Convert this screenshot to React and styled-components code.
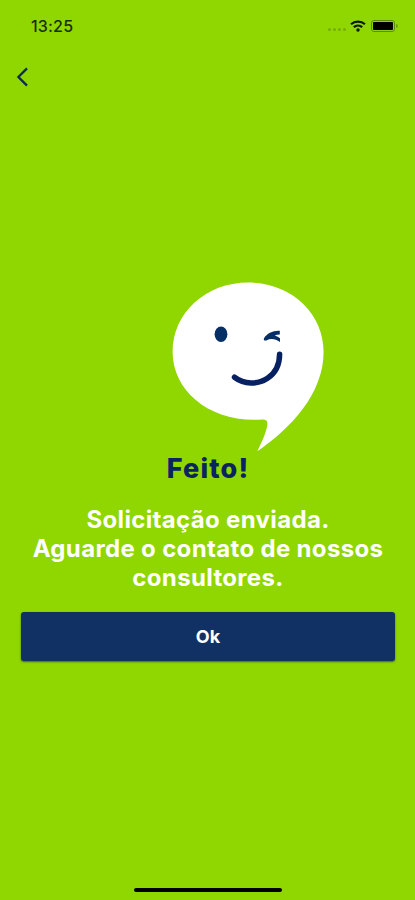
import React from 'react'
import styled, { createGlobalStyle } from 'styled-components'

const App = () => {
  return (
    <>
      <GlobalStyle />
      <Screen>
        <StatusBar>
          <Time>13:25</Time>
          <StatusIcons>
            <Dots>
              <i /><i /><i /><i />
            </Dots>
            <Wifi viewBox="0 0 16 12">
              <path d="M1 4.2C4.8.7 11.2.7 15 4.2" />
              <path d="M3.8 7.1c2.4-2.1 6-2.1 8.4 0" />
              <circle cx="8" cy="10" r="1.7" />
            </Wifi>
            <Battery />
            <BatteryTip />
          </StatusIcons>
        </StatusBar>

        <Header>
          <BackButton aria-label="Voltar">
            <svg width="12" height="20" viewBox="0 0 12 20">
              <path d="M11 1.4L2.4 10l8.6 8.6" />
            </svg>
          </BackButton>
        </Header>

        <Content>
          <Bubble viewBox="0 0 152 170">
            <path
              fill="#fff"
              d="M76 .6C119 .6 151.6 31 151.6 70C151.6 112 118 147 85.3 169.3C91 158 96.3 145 95.3 140.5C94.8 138 93 137.4 90 137.6C38 141 .6 109 .6 70C.6 31 34 .6 76 .6Z"
            />
            <ellipse cx="49" cy="52.2" rx="6.4" ry="7.7" fill="#062f66" />
            <path
              fill="#062f66"
              d="M92 56.2C95 51.2 101 48.3 107.8 48.7V52.4Q104.5 52.5 102.8 53.4Q106 54.4 108 56.2V59.9C103.5 56.9 99 56 94.4 58.4Q91 59 92 56.2Z"
            />
            <path
              d="M62.5 95.2C72 102.5 86 102.8 95.5 96.3C104.5 90.2 107.6 82 107.6 72.2"
              fill="none"
              stroke="#062061"
              strokeWidth="5.5"
              strokeLinecap="round"
            />
          </Bubble>
          <Title>Feito!</Title>
          <Message>
            Solicitação enviada.<br />
            Aguarde o contato de nossos<br />
            consultores.
          </Message>
          <OkButton>Ok</OkButton>
        </Content>

        <HomeIndicator />
      </Screen>
    </>
  )
}

export default App

const GlobalStyle = createGlobalStyle`
* {
    box-sizing: border-box;
}

body {
    margin: 0;
    background-color: #90d600;
    font-family: Inter, "Liberation Sans", sans-serif;
}
`

const Screen = styled.div`
display: flex;
flex-direction: column;
width: 100%;
height: 900px;
overflow: hidden;
background-color: #90d600;
`

const StatusBar = styled.div`
display: flex;
align-items: center;
justify-content: space-between;
height: 51px;
padding: 0 17px 0 31px;
`

const Time = styled.span`
font-size: 16px;
font-weight: 500;
letter-spacing: 0.2px;
color: #173000;
`

const StatusIcons = styled.div`
display: flex;
align-items: center;
`

const Dots = styled.div`
display: flex;
gap: 2px;
margin: 7px 4px 0 0;

i {
    width: 3px;
    height: 3px;
    border-radius: 50%;
    background-color: #75ae00;
}
`

const Wifi = styled.svg`
width: 16px;
height: 12px;
margin-right: 5px;

path {
    fill: none;
    stroke: #0c1a00;
    stroke-width: 2.2;
}

circle {
    fill: #0c1a00;
}
`

const Battery = styled.div`
width: 24px;
height: 12px;
border: 1px solid #5c8b00;
border-radius: 3px;
padding: 1px;

&:before {
    content: '';
    display: block;
    height: 100%;
    border-radius: 1px;
    background-color: #000;
}
`

const BatteryTip = styled.div`
width: 2px;
height: 4px;
margin-left: 1px;
border-radius: 0 2px 2px 0;
background-color: #6ca200;
`

const Header = styled.header`
display: flex;
align-items: center;
height: 51px;
padding-left: 16px;
`

const BackButton = styled.button`
display: flex;
padding: 0;
border: 0;
background: none;

path {
    fill: none;
    stroke: #0d2c55;
    stroke-width: 2.3;
}
`

const Content = styled.main`
display: flex;
flex-direction: column;
align-items: center;
flex: 1;
padding: 180px 20px 0 21px;
`

const Bubble = styled.svg`
width: 152px;
height: 170px;
// the tail hangs to the right of the title
margin-left: 79px;
`

const Title = styled.h1`
margin: 1px 0 0;
font-size: 27px;
line-height: 32px;
font-weight: 800;
letter-spacing: 1.2px;
color: #0a2460;
`

const Message = styled.p`
margin: 20px 0 0;
font-size: 24px;
line-height: 29px;
font-weight: 700;
letter-spacing: 0.34px;
text-align: center;
white-space: nowrap;
color: #fff;
`

const OkButton = styled.button`
width: 100%;
height: 49px;
margin-top: 20px;
border: 0;
border-radius: 3px;
background-color: #113064;
box-shadow: 0 1px 2px rgba(0, 30, 60, 0.6);
font-family: inherit;
font-size: 18px;
font-weight: 700;
color: #fff;
`

const HomeIndicator = styled.div`
align-self: center;
width: 148px;
height: 4px;
margin-bottom: 8px;
border-radius: 2px;
background-color: #000;
`
